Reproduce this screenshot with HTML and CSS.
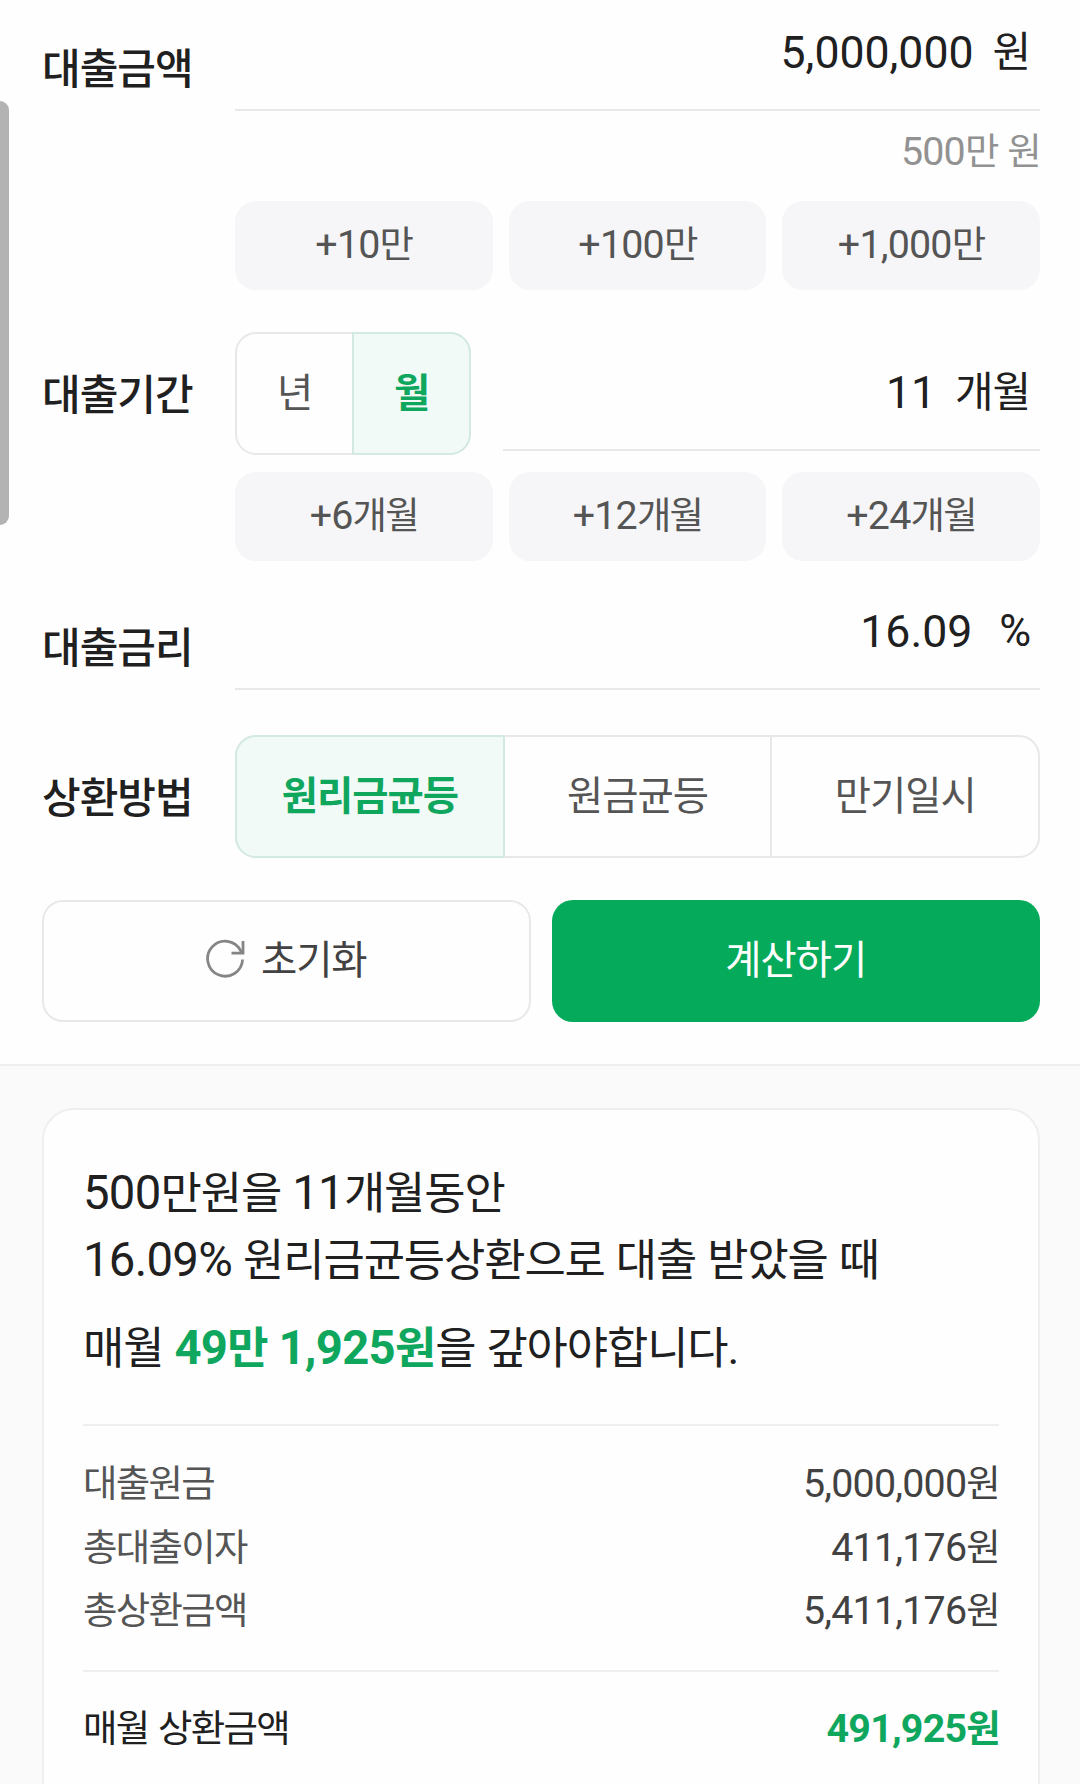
FILE: index.html
```html
<!DOCTYPE html>
<html lang="ko">

<head>
  <meta charset="UTF-8">
  <title>대출 계산기</title>
  <link rel="stylesheet" href="styles.css">
</head>

<body>
  <div class="scrollbar"></div>

  <form class="calculator">
    <div class="row">
      <div class="label label-low">대출금액</div>
      <div class="content">
        <div class="field">
          <span class="value">5,000,000</span>
          <span class="unit">원</span>
        </div>
        <p class="hint">500<span class="ko">만 원</span></p>
        <div class="chips">
          <button type="button" class="chip">+10<span class="ko">만</span></button>
          <button type="button" class="chip">+100<span class="ko">만</span></button>
          <button type="button" class="chip">+1,000<span class="ko">만</span></button>
        </div>
      </div>
    </div>

    <div class="row row-period">
      <div class="label">대출기간</div>
      <div class="content">
        <div class="period">
          <div class="tabs tabs-small">
            <button type="button" class="tab">년</button>
            <button type="button" class="tab active">월</button>
          </div>
          <div class="field field-period">
            <span class="value">11</span>
            <span class="unit">개월</span>
          </div>
        </div>
        <div class="chips">
          <button type="button" class="chip">+6<span class="ko">개월</span></button>
          <button type="button" class="chip">+12<span class="ko">개월</span></button>
          <button type="button" class="chip">+24<span class="ko">개월</span></button>
        </div>
      </div>
    </div>

    <div class="row row-rate">
      <div class="label label-low">대출금리</div>
      <div class="content">
        <div class="field">
          <span class="value">16.09</span>
          <span class="unit percent">%</span>
        </div>
      </div>
    </div>

    <div class="row row-method">
      <div class="label">상환방법</div>
      <div class="content">
        <div class="tabs">
          <button type="button" class="tab active">원리금균등</button>
          <button type="button" class="tab">원금균등</button>
          <button type="button" class="tab">만기일시</button>
        </div>
      </div>
    </div>

    <div class="actions">
      <button type="reset" class="btn btn-reset">
        <svg class="icon-reset" width="40" height="40" viewBox="0 0 40 40">
          <path d="M36.6 20.5A17.5 17.5 0 1 1 34.6 11.5L36.4 14.1" />
          <path d="M37 2V14.2H25.5" />
        </svg>
        초기화
      </button>
      <button type="button" class="btn btn-submit">계산하기</button>
    </div>
  </form>

  <section class="result">
    <div class="card">
      <div class="summary">
        <p>500<span class="ko">만원을</span> 11<span class="ko">개월동안</span></p>
        <p>16.09% <span class="ko">원리금균등상환으로 대출 받았을 때</span></p>
        <p class="monthly"><span class="ko">매월</span> <strong>49<span class="ko">만</span> 1,925<span class="ko">원</span></strong><span class="ko">을 갚아야합니다.</span></p>
      </div>
      <dl class="details">
        <div class="detail">
          <dt><span class="ko">대출원금</span></dt>
          <dd>5,000,000<span class="ko">원</span></dd>
        </div>
        <div class="detail">
          <dt><span class="ko">총대출이자</span></dt>
          <dd>411,176<span class="ko">원</span></dd>
        </div>
        <div class="detail">
          <dt><span class="ko">총상환금액</span></dt>
          <dd>5,411,176<span class="ko">원</span></dd>
        </div>
      </dl>
      <dl class="total">
        <dt><span class="ko">매월 상환금액</span></dt>
        <dd>491,925<span class="ko">원</span></dd>
      </dl>
    </div>
  </section>
</body>

</html>
```
FILE: styles.css
```css
* {
  box-sizing: border-box;
}

body {
  margin: 0;
  height: 1784px;
  overflow: hidden;
  background: #fefefe;
  color: #202020;
  font-family: Roboto, "Noto Sans CJK KR", sans-serif;
  font-size: 39.4px;
}

p,
dl,
dd {
  margin: 0;
}

button {
  margin: 0;
  padding: 0;
  border: none;
  background: none;
  font: inherit;
  line-height: 60px;
  color: inherit;
}

/* hangul is set a little smaller and tighter than the digits */
.ko {
  font-size: 0.95em;
  line-height: 1;
  letter-spacing: -1.7px;
  word-spacing: 2px;
}

/* scroll handle over the left edge */
.scrollbar {
  position: absolute;
  top: 101px;
  left: 0;
  width: 9px;
  height: 424px;
  background: #b3b3b3;
  border-radius: 0 9px 9px 0;
}

.calculator {
  height: 1066px;
  padding: 0 40px 0 42px;
  border-bottom: 2px solid #efefef;
}

.row {
  display: grid;
  grid-template-columns: 193px 805px;
}

.row-period {
  margin-top: 42px;
}

.row-rate {
  margin-top: 18px;
}

.row-method {
  margin-top: 45px;
}

.label {
  height: 123px;
  line-height: 127px;
  font-size: 42px;
  font-weight: 500;
  letter-spacing: -1px;
}

.label-low {
  height: 111px;
  line-height: 140px;
}

.field {
  display: flex;
  justify-content: flex-end;
  height: 111px;
  padding-right: 10px;
  border-bottom: 2px solid #e8e8e8;
  font-size: 44.6px;
  line-height: 106px;
}

.unit {
  margin-left: 19px;
  font-size: 42px;
  letter-spacing: -1.2px;
}

.percent {
  margin-left: 27px;
  font-size: 43.5px;
}

.hint {
  height: 90px;
  line-height: 82px;
  text-align: right;
  color: #929292;
  letter-spacing: -0.8px;
}

.chips {
  display: grid;
  grid-template-columns: repeat(3, 1fr);
  gap: 16px;
}

.chip {
  height: 89px;
  padding-bottom: 2px;
  border-radius: 21px;
  background: #f6f6f8;
  color: #555;
  letter-spacing: -0.8px;
}

.period {
  display: flex;
  justify-content: space-between;
  height: 140px;
}

.field-period {
  width: 537px;
  height: 119px;
  line-height: 122px;
}

.tabs {
  display: flex;
  height: 123px;
  border: 2px solid #e8e8e8;
  border-radius: 21px;
}

.tabs-small {
  width: 236px;
}

.tab {
  flex: 1;
  letter-spacing: -1px;
  color: #555;
}

.tab + .tab {
  border-left: 2px solid #e8e8e8;
}

.tab.active {
  margin: -2px;
  border: 2px solid #d3eae1;
  background: #f2faf8;
  color: #0fa65e;
  font-weight: 700;
}

.tab.active:first-child {
  margin-right: 0;
  border-radius: 21px 0 0 21px;
}

.tab.active:last-child {
  margin-left: 0;
  border-radius: 0 21px 21px 0;
}

.tab.active + .tab {
  border-left: none;
}

.actions {
  display: grid;
  grid-template-columns: 1fr 1fr;
  gap: 21px;
  margin-top: 42px;
}

.btn {
  display: flex;
  align-items: center;
  justify-content: center;
  height: 122px;
  border-radius: 21px;
  letter-spacing: -1px;
}

.btn-reset {
  gap: 15px;
  border: 2px solid #e8e8e8;
  color: #424242;
}

.btn-submit {
  background: #06aa5b;
  color: #fff;
}

.icon-reset {
  margin-bottom: 5px;
  fill: none;
  stroke: #858585;
  stroke-width: 2.8;
}

.result {
  height: 718px;
  padding: 42px 40px 0 42px;
  background: #fafafa;
}

.card {
  height: 720px;
  padding: 50px 39px 0;
  border: 2px solid #efefef;
  border-radius: 32px;
  background: #fefefe;
}

.summary {
  height: 266px;
  border-bottom: 2px solid #efefef;
  font-size: 47.25px;
  line-height: 67px;
  letter-spacing: -0.7px;
  white-space: nowrap;
}

.summary .ko {
  letter-spacing: -1.1px;
  word-spacing: 1px;
}

.monthly {
  margin-top: 21px;
}

.summary strong {
  color: #0fa65e;
}

.details {
  height: 246px;
  padding-top: 26px;
  border-bottom: 2px solid #efefef;
}

.detail,
.total {
  display: flex;
  justify-content: space-between;
  height: 63.5px;
  line-height: 63.5px;
  letter-spacing: -0.8px;
}

.detail dt {
  color: #555;
}

.detail dd {
  color: #424242;
}

.total {
  margin-top: 25px;
}

.total dd {
  color: #0fa65e;
  font-weight: 700;
}
```
